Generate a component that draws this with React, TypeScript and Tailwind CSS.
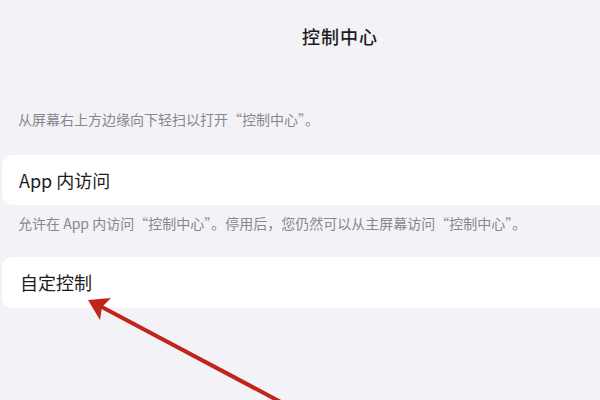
export default function App() {
  return (
    <div
      className="relative h-[400px] w-[600px] overflow-hidden bg-[#f2f2f7] text-[#1c1c1e]"
      style={{ fontFamily: '"Noto Sans CJK SC", "Noto Sans", sans-serif' }}
    >
      {/* Nav title */}
      <div className="flex h-[72px] items-center justify-center pl-[80px]">
        <h1 className="text-[18px] font-medium tracking-[1px]">控制中心</h1>
      </div>

      {/* Header note */}
      <p className="mt-[37px] pl-[18px] text-[14px] leading-[20px] text-[#88888c]">
        从屏幕右上方边缘向下轻扫以打开“控制中心”。
      </p>

      {/* App access row */}
      <div className="ml-[2px] mt-[26px] flex h-[50px] w-[640px] items-center rounded-[10px] bg-white pl-[17px]">
        <span className="text-[18px]">App 内访问</span>
      </div>
      <p className="mt-[8px] pl-[18px] text-[14px] leading-[20px] text-[#88888c]">
        允许在 App 内访问“控制中心”。停用后，您仍然可以从主屏幕访问“控制中心”。
      </p>

      {/* Customize row */}
      <div className="ml-[2px] mt-[24px] flex h-[51px] w-[640px] items-center rounded-[10px] bg-white pl-[18px]">
        <span className="text-[18px]">自定控制</span>
      </div>

      {/* Annotation arrow */}
      <svg className="pointer-events-none absolute left-0 top-0" width="600" height="400" viewBox="0 0 600 400">
        <line x1="100" y1="306" x2="292" y2="408" stroke="#c1241b" strokeWidth="4" strokeLinecap="round" />
        <polygon points="88,300 111,298 102,307 100,320" fill="#c1241b" />
      </svg>
    </div>
  )
}
